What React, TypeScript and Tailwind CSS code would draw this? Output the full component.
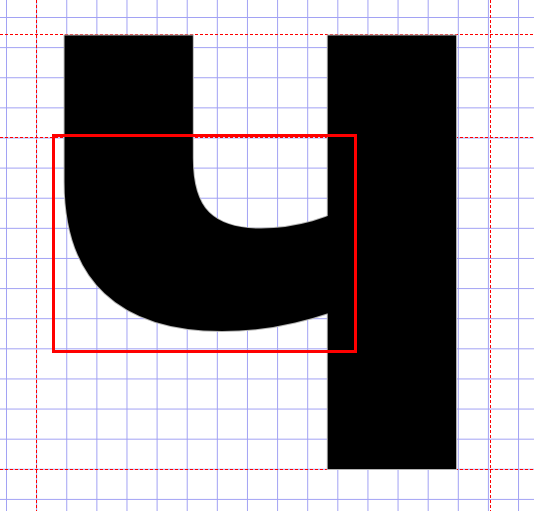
const STEP = 30.12;
const cols = Array.from({ length: 18 }, (_, i) => 6.5 + i * STEP);
const rows = Array.from({ length: 17 }, (_, i) => 17.5 + i * STEP);

function Grid() {
  return (
    <svg className="absolute inset-0" width={534} height={511}>
      {cols.map((x) => (
        <line key={`c${x}`} x1={x} y1={0} x2={x} y2={511} stroke="#a2a2f4" strokeWidth={1} />
      ))}
      {rows.map((y) => (
        <line key={`r${y}`} x1={0} y1={y} x2={534} y2={y} stroke="#a2a2f4" strokeWidth={1} />
      ))}
      {/* guides */}
      {[34.5, 137.5, 469.5].map((y) => (
        <line key={`g${y}`} x1={0} y1={y} x2={534} y2={y} stroke="#ff0000" strokeWidth={1} strokeDasharray="3 2" />
      ))}
      {[36.5, 490.5].map((x) => (
        <line key={`v${x}`} x1={x} y1={0} x2={x} y2={511} stroke="#ff0000" strokeWidth={1} strokeDasharray="3 2" />
      ))}
    </svg>
  );
}

export default function App() {
  return (
    <div className="relative w-[534px] h-[511px] overflow-hidden bg-white">
      <Grid />
      <div className="absolute left-[68px] top-[-231px] w-[400px] flex justify-center">
        <span className="block shrink-0 leading-none text-black font-[785] text-[789px] scale-x-[0.965] [font-family:'Noto_Sans',sans-serif] [-webkit-text-stroke:2px_#b4b4b4] [paint-order:stroke_fill]">
          ч
        </span>
      </div>
      <div className="absolute left-[52px] top-[134px] w-[305px] h-[219px] border-[3px] border-[#ff0000]" />
    </div>
  );
}
